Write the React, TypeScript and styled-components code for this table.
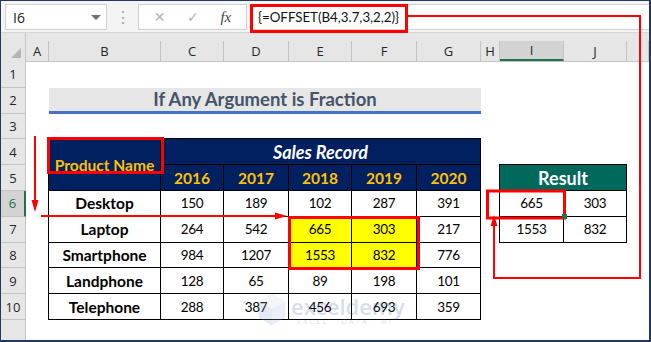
import React from 'react';
import styled, { createGlobalStyle } from 'styled-components';

const GlobalStyle = createGlobalStyle`
  html, body {
    margin: 0;
    padding: 0;
    background: #ffffff;
  }
  body {
    width: 651px;
    height: 342px;
    overflow: hidden;
  }
`;

const COL_WIDTHS = [23, 112, 63, 65, 63, 65, 64, 19, 64, 63];
const LETTERS = ['A', 'B', 'C', 'D', 'E', 'F', 'G', 'H', 'I', 'J'];
const YEARS = ['2016', '2017', '2018', '2019', '2020'];

const ROWS: [string, number[]][] = [
  ['Desktop', [150, 189, 102, 287, 391]],
  ['Laptop', [264, 542, 665, 303, 217]],
  ['Smartphone', [984, 1207, 1553, 832, 776]],
  ['Landphone', [128, 65, 89, 198, 101]],
  ['Telephone', [288, 387, 456, 693, 359]],
];

const RESULT = [
  [665, 303],
  [1553, 832],
];

const Frame = styled.div`
  position: relative;
  width: 651px;
  height: 342px;
  box-sizing: border-box;
  border: 1px solid #23375f;
  border-right-width: 2px;
  border-bottom-width: 2px;
  display: flex;
  flex-direction: column;
  overflow: hidden;
  background: #ffffff;
`;

const FormulaBar = styled.div`
  height: 31px;
  box-sizing: border-box;
  padding: 3px 0 0 4px;
  display: flex;
  align-items: flex-start;
  background: #f4f4f4;
  font-family: 'Open Sans', 'Noto Sans', sans-serif;
`;

const NameBox = styled.div`
  width: 102px;
  height: 26px;
  box-sizing: border-box;
  border: 1px solid #d0d0d0;
  background: #ffffff;
  display: flex;
  align-items: center;
  justify-content: space-between;
  padding: 0 5px 0 7px;
  font-size: 14px;
  color: #222;
`;

const Caret = styled.span`
  width: 0;
  height: 0;
  border-left: 5px solid transparent;
  border-right: 5px solid transparent;
  border-top: 5px solid #707070;
`;

const Dots = styled.div`
  width: 31px;
  height: 26px;
  display: flex;
  align-items: center;
  justify-content: center;
  color: #a8a8a8;
  font-size: 16px;
`;

const FxBox = styled.div`
  width: 109px;
  height: 26px;
  box-sizing: border-box;
  border: 1px solid #d0d0d0;
  background: #ffffff;
  display: flex;
  align-items: center;
  justify-content: space-around;
  padding: 0 4px;
`;

const FxButton = styled.span<{ $serif?: boolean }>`
  font-family: ${(p) => (p.$serif ? "'Liberation Serif', serif" : "'DejaVu Sans', sans-serif")};
  font-style: ${(p) => (p.$serif ? 'italic' : 'normal')};
  font-size: ${(p) => (p.$serif ? '15px' : '14px')};
  color: ${(p) => (p.$serif ? '#444' : '#b4b4b4')};
`;

const FormulaInput = styled.div`
  flex: 1;
  margin-left: 4px;
  height: 26px;
  box-sizing: border-box;
  border: 1px solid #d0d0d0;
  border-right: none;
  background: #ffffff;
  display: flex;
  align-items: center;
  padding-left: 6px;
  font-family: Lato, 'Liberation Sans', sans-serif;
  font-size: 13.3px;
  color: #111;
`;

const Sheet = styled.div`
  flex: 1;
  display: grid;
  grid-template-columns: 25px ${COL_WIDTHS.map((w) => `${w}px`).join(' ')} 1fr;
  grid-template-rows: 29px repeat(10, 25.8px) 1fr;
  border-top: 1px solid #d6d6d6;
  font-family: Lato, 'Liberation Sans', sans-serif;
`;

const Corner = styled.div`
  grid-column: 1;
  grid-row: 1;
  background: #e6e6e6;
  border-right: 1px solid #c4c4c4;
  position: relative;
  &::after {
    content: '';
    position: absolute;
    right: 4px;
    bottom: 4px;
    width: 0;
    height: 0;
    border-left: 10px solid transparent;
    border-bottom: 10px solid #b5b5b5;
  }
`;

const ColHead = styled.div<{ $col: number }>`
  grid-column: ${(p) => p.$col};
  grid-row: 1;
  background: #e6e6e6;
  display: flex;
  align-items: flex-end;
  border-bottom: 1px solid #c4c4c4;
`;

const ColLabel = styled.div<{ $active?: boolean }>`
  flex: 1;
  height: 20px;
  box-sizing: border-box;
  display: flex;
  align-items: center;
  justify-content: center;
  border-right: 1px solid #c4c4c4;
  background: ${(p) => (p.$active ? '#d3d3d3' : 'transparent')};
  border-bottom: ${(p) => (p.$active ? '2px solid #217346' : 'none')};
  font-family: 'Open Sans', 'Noto Sans', sans-serif;
  font-size: 13px;
  color: #262626;
`;

const RowHead = styled.div<{ $row: number; $active?: boolean }>`
  grid-column: 1;
  grid-row: ${(p) => p.$row};
  box-sizing: border-box;
  background: ${(p) => (p.$active ? '#d3d3d3' : '#e6e6e6')};
  border-bottom: 1px solid #c4c4c4;
  border-right: ${(p) => (p.$active ? '2px solid #217346' : '1px solid #c4c4c4')};
  display: flex;
  align-items: center;
  justify-content: center;
  font-family: 'Open Sans', 'Noto Sans', sans-serif;
  font-size: 13px;
  color: ${(p) => (p.$active ? '#217346' : '#262626')};
`;

const RowHeadRest = styled.div`
  grid-column: 1;
  grid-row: 12;
  background: #e6e6e6;
  border-right: 1px solid #c4c4c4;
`;

const Title = styled.div`
  grid-column: 3 / 9;
  grid-row: 3;
  background: #e7e6e6;
  border-bottom: 3px solid #4472c4;
  display: flex;
  align-items: center;
  justify-content: center;
  font-size: 18.5px;
  font-weight: 700;
  color: #44546a;
`;

type Tone = 'navy' | 'teal' | 'plain' | 'yellow';

const BG: Record<Tone, string> = {
  navy: '#002060',
  teal: '#00695c',
  plain: '#ffffff',
  yellow: '#ffff00',
};

const Cell = styled.div<{
  $col: string;
  $row: string;
  $tone?: Tone;
  $l?: boolean;
  $t?: boolean;
}>`
  grid-column: ${(p) => p.$col};
  grid-row: ${(p) => p.$row};
  box-sizing: border-box;
  margin-top: ${(p) => (p.$t ? '-1px' : '0')};
  margin-left: ${(p) => (p.$l ? '-1px' : '0')};
  border-right: 1px solid #000;
  border-bottom: 1px solid #000;
  border-left: ${(p) => (p.$l ? '1px solid #000' : 'none')};
  border-top: ${(p) => (p.$t ? '1px solid #000' : 'none')};
  background: ${(p) => BG[p.$tone || 'plain']};
  display: flex;
  align-items: center;
  justify-content: center;
  font-size: 13.5px;
  letter-spacing: -0.3px;
  color: #000;
`;

const Gold = styled.span<{ $size?: number }>`
  color: #ffc000;
  font-weight: 700;
  font-size: ${(p) => p.$size || 15.5}px;
  letter-spacing: 0;
`;

const White = styled.span<{ $italic?: boolean }>`
  color: #ffffff;
  font-weight: 700;
  font-style: ${(p) => (p.$italic ? 'italic' : 'normal')};
  font-size: 18px;
  letter-spacing: 0;
`;

const Name = styled.span`
  font-weight: 700;
  font-size: 15.5px;
  letter-spacing: 0;
`;

const Watermark = styled.div`
  position: absolute;
  left: 254px;
  top: 291px;
  display: flex;
  align-items: flex-start;
  gap: 2px;
  opacity: 0.2;
  pointer-events: none;
`;

const WatermarkText = styled.div`
  display: flex;
  flex-direction: column;
  padding-top: 3px;
  font-family: 'Open Sans', 'Noto Sans', sans-serif;
  color: #3a5aa8;
`;

const WatermarkWord = styled.span`
  font-size: 22px;
  font-weight: 600;
  line-height: 22px;
`;

const WatermarkTag = styled.span`
  font-size: 7px;
  letter-spacing: 2.4px;
  margin-left: 6px;
  line-height: 10px;
`;

const Overlay = styled.svg`
  position: absolute;
  left: 0;
  top: 0;
  pointer-events: none;
`;

function App() {
  return (
    <>
      <GlobalStyle />
      <Frame>
        <FormulaBar>
          <NameBox>
            I6
            <Caret />
          </NameBox>
          <Dots>⋮</Dots>
          <FxBox>
            <FxButton>✕</FxButton>
            <FxButton>✓</FxButton>
            <FxButton $serif>fx</FxButton>
          </FxBox>
          <FormulaInput>{'{=OFFSET(B4,3.7,3,2,2)}'}</FormulaInput>
        </FormulaBar>

        <Sheet>
          <Corner />
          {LETTERS.map((l, i) => (
            <ColHead key={l} $col={i + 2}>
              <ColLabel $active={l === 'I'}>{l}</ColLabel>
            </ColHead>
          ))}
          <ColHead $col={12}>
            <ColLabel />
          </ColHead>

          {Array.from({ length: 10 }, (_, i) => (
            <RowHead key={i} $row={i + 2} $active={i + 1 === 6}>
              {i + 1}
            </RowHead>
          ))}
          <RowHeadRest />

          <Title>If Any Argument is Fraction</Title>

          <Cell $col="3" $row="5 / 7" $tone="navy" $l $t>
            <Gold>Product Name</Gold>
          </Cell>
          <Cell $col="4 / 9" $row="5" $tone="navy" $t>
            <White $italic>Sales Record</White>
          </Cell>
          {YEARS.map((y, i) => (
            <Cell key={y} $col={`${i + 4}`} $row="6" $tone="navy">
              <Gold>{y}</Gold>
            </Cell>
          ))}

          {ROWS.map(([name, values], r) => (
            <React.Fragment key={name}>
              <Cell $col="3" $row={`${r + 7}`} $l>
                <Name>{name}</Name>
              </Cell>
              {values.map((v, i) => (
                <Cell
                  key={i}
                  $col={`${i + 4}`}
                  $row={`${r + 7}`}
                  $tone={(r === 1 || r === 2) && (i === 2 || i === 3) ? 'yellow' : 'plain'}
                >
                  {v}
                </Cell>
              ))}
            </React.Fragment>
          ))}

          <Cell $col="10 / 12" $row="6" $tone="teal" $l $t>
            <White>Result</White>
          </Cell>
          {RESULT.map((pair, r) =>
            pair.map((v, i) => (
              <Cell key={`${r}-${i}`} $col={`${i + 10}`} $row={`${r + 7}`} $l={i === 0}>
                {v}
              </Cell>
            ))
          )}
        </Sheet>

        <Watermark>
          <svg width="34" height="36" viewBox="0 0 34 38">
            <path d="M17 2 L31 10 L31 27 L17 35 L3 27 L3 10 Z" fill="#9fb3e0" />
            <path d="M17 2 L31 10 L17 18 L3 10 Z" fill="#c9d5ef" />
            <path d="M17 18 L17 35 L3 27 L3 10 Z" fill="#7d95cf" />
          </svg>
          <WatermarkText>
            <WatermarkWord>exceldemy</WatermarkWord>
            <WatermarkTag>EXCEL · DATA · BI</WatermarkTag>
          </WatermarkText>
        </Watermark>

        <Overlay width="651" height="342" viewBox="0 0 651 342">
          <g fill="none" stroke="#ff0000">
            <rect x="250.5" y="4.5" width="155" height="26" strokeWidth="3" />
            <rect x="47.5" y="137.5" width="114" height="34" strokeWidth="3" />
            <rect x="288.5" y="216.5" width="129" height="51" strokeWidth="3" />
            <rect x="486.5" y="190" width="77" height="27" strokeWidth="3" />
            <path d="M406 15 H639 V277 H493 V222" strokeWidth="2" />
            <path d="M34 135 V201" strokeWidth="2" />
            <path d="M40 215 H276" strokeWidth="2" />
          </g>
          <g fill="#ff0000">
            <path d="M30.5 199 L37.5 199 L34 211 Z" />
            <path d="M274 211.5 L274 218.5 L286 215 Z" />
            <path d="M489.5 225 L496.5 225 L493 214 Z" />
          </g>
          <rect x="561" y="213" width="5" height="5" fill="#217346" />
        </Overlay>
      </Frame>
    </>
  );
}

export default App;
